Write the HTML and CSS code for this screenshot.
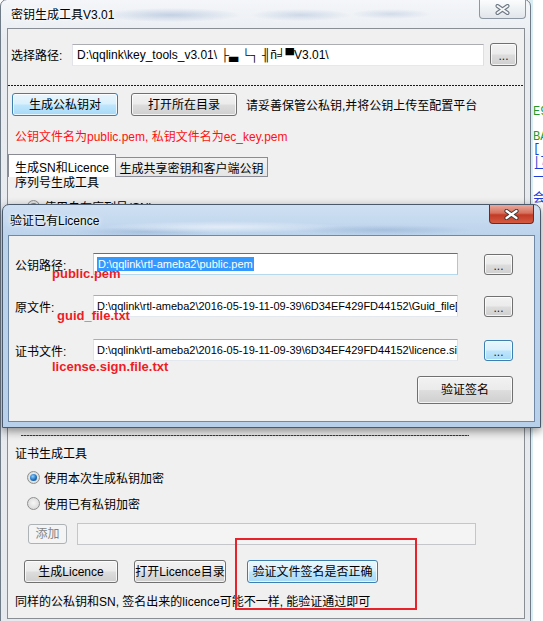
FILE: index.html
```html
<!DOCTYPE html>
<html lang="zh-CN">
<head>
<meta charset="utf-8">
<title>密钥生成工具V3.01</title>
<link rel="stylesheet" href="styles.css">
</head>
<body>
<div class="bgwin">
  <div class="code">
    <div class="ln g t1">E9</div>
    <div class="ln g t2">BA</div>
    <div class="ln b t3">[</div>
    <div class="ln b t4">|7&lt;</div>
    <div class="ln b t5">二</div>
    <div class="ln b t6">会</div>
  </div>
</div>

<div class="win main">
  <div class="titlebar">
    <span class="title">密钥生成工具V3.01</span>
    <div class="cbtn cbtn-gray">
      <svg width="15" height="11" viewBox="0 0 15 11"><path d="M2.5 2 L12.5 9 M12.5 2 L2.5 9" stroke="#6c7783" stroke-width="4" stroke-linecap="round"/><path d="M2.5 2 L12.5 9 M12.5 2 L2.5 9" stroke="#f4f6f8" stroke-width="2" stroke-linecap="round"/></svg>
    </div>
  </div>
  <div class="client main-client">
    <div class="row path-row">
      <span class="lbl lbl-path">选择路径:</span>
      <div class="tb tb-path">D:\qqlink\key_tools_v3.01\ ├▃ └┐ ╢ñ╛▀V3.01\</div>
      <button class="btn dots-btn main-dots">...</button>
    </div>
    <div class="dash"></div>
    <div class="row key-row">
      <button class="btn blue w106">生成公私钥对</button>
      <button class="btn w106 gap13">打开所在目录</button>
      <span class="note">请妥善保管公私钥,并将公钥上传至配置平台</span>
    </div>
    <div class="red-note">公钥文件名为public.pem, 私钥文件名为ec_key.pem</div>
    <div class="tabs">
      <div class="tab tab-sel">生成SN和Licence</div>
      <div class="tab tab-off">生成共享密钥和客户端公钥</div>
    </div>
    <div class="group-title gt1">序列号生成工具</div>
    <div class="radio-row rr0"><span class="radio on"></span><span>使用自有序列号(SN)</span></div>

    <div class="dotline"></div>
    <div class="group-title gt2">证书生成工具</div>
    <div class="radio-row rr1"><span class="radio on"></span><span>使用本次生成私钥加密</span></div>
    <div class="radio-row rr2"><span class="radio"></span><span>使用已有私钥加密</span></div>
    <div class="row add-row">
      <button class="btn dis add-btn">添加</button>
      <div class="tb tb-dis"></div>
    </div>
    <div class="row act-row">
      <button class="btn b1">生成Licence</button>
      <button class="btn b2">打开Licence目录</button>
      <button class="btn blue b3">验证文件签名是否正确</button>
    </div>
    <div class="bottom-note">同样的公私钥和SN, 签名出来的licence可能不一样, 能验证通过即可</div>
  </div>
</div>

<div class="win dlg">
  <div class="titlebar dlg-tb">
    <span class="title dlg-title">验证已有Licence</span>
    <div class="cbtn cbtn-red">
      <svg width="15" height="11" viewBox="0 0 15 11"><path d="M2.5 2 L12.5 9 M12.5 2 L2.5 9" stroke="#3d3d3d" stroke-width="4.2" stroke-linecap="round"/><path d="M2.5 2 L12.5 9 M12.5 2 L2.5 9" stroke="#ffffff" stroke-width="2.2" stroke-linecap="round"/></svg>
    </div>
  </div>
  <div class="client dlg-client">
    <div class="row drow dr1">
      <span class="dlbl">公钥路径:</span>
      <div class="tb dtb focus"><span class="sel">D:\qqlink\rtl-ameba2\public.pem</span></div>
      <button class="btn dots-btn ddots">...</button>
    </div>
    <div class="row drow dr2">
      <span class="dlbl">原文件:</span>
      <div class="tb dtb">D:\qqlink\rtl-ameba2\2016-05-19-11-09-39\6D34EF429FD44152\Guid_file[</div>
      <button class="btn dots-btn ddots">...</button>
    </div>
    <div class="row drow dr3">
      <span class="dlbl">证书文件:</span>
      <div class="tb dtb">D:\qqlink\rtl-ameba2\2016-05-19-11-09-39\6D34EF429FD44152\licence.si</div>
      <button class="btn blue dots-btn ddots">...</button>
    </div>
    <button class="btn verify">验证签名</button>
  </div>
</div>

<div class="annot a1">public.pem</div>
<div class="annot a2">guid_file.txt</div>
<div class="annot a3">license.sign.file.txt</div>
<div class="redbox"></div>
</body>
</html>
```

FILE: styles.css
```css
* { box-sizing: border-box; }
html, body { margin: 0; padding: 0; }
body {
  width: 543px;
  height: 621px;
  overflow: hidden;
  position: relative;
  background: #ffffff;
  font-family: "Liberation Sans", "Noto Sans CJK SC", sans-serif;
  font-size: 12px;
  color: #000;
}

/* background editor window on the right */
.bgwin {
  position: absolute;
  left: 529px;
  top: 0;
  width: 14px;
  height: 621px;
  overflow: hidden;
  background: #ffffff;
  border-left: 4px solid #d9eef4;
}
.code { font-family: "Liberation Mono", "Noto Sans CJK SC", monospace; font-size: 12px; line-height: 12px; }
.ln { white-space: nowrap; }
.g { color: #1f9a2a; }
.b { color: #1d3fd8; }
.t1 { margin-top: 106px; }
.t2 { margin-top: 13px; }
.t3 { margin-top: 0; }
.t4 { margin-top: 1px; }
.t5 { margin-top: 0; }
.t6 { margin-top: 13px; }

/* windows */
.win {
  position: absolute;
  border: 1px solid #707b88;
  border-radius: 7px 7px 0 0;
  display: flex;
  flex-direction: column;
}
.main {
  left: 0;
  top: -1px;
  width: 531px;
  height: 640px;
  padding: 0 5px 0 6px;
  background:
    radial-gradient(ellipse 70px 7px at 170px 15px, rgba(140,168,205,.45), transparent),
    radial-gradient(ellipse 50px 6px at 300px 15px, rgba(140,168,205,.35), transparent),
    radial-gradient(ellipse 40px 5px at 390px 14px, rgba(140,168,205,.30), transparent),
    linear-gradient(#f4f6f9, #e8ecf1 40px, #e6e9ee);
}
.titlebar {
  height: 28px;
  display: flex;
  align-items: flex-start;
  flex: none;
}
.title {
  line-height: 30px;
  padding-left: 4px;
  text-shadow: 0 0 6px #fff, 0 0 3px #fff;
}
.cbtn {
  margin-left: auto;
  width: 47px;
  height: 19px;
  border-radius: 0 0 4px 4px;
  display: flex;
  align-items: center;
  justify-content: center;
}
.cbtn-gray {
  margin-right: -1px;
  border: 1px solid #8d97a3;
  border-top: none;
  background: linear-gradient(#fbfcfd, #eef1f4 50%, #e2e6eb);
}
.client {
  border: 1px solid #898e95;
  background: #f0f0f0;
  position: relative;
}
.main-client { height: 591px; }

.row { display: flex; align-items: center; }
.lbl-path { width: 61px; white-space: nowrap; }
.path-row { margin: 14px 0 0 3px; height: 23px; }

.tb {
  height: 22px;
  background: #fff;
  border: 1px solid;
  border-color: #abadb3 #dbdfe6 #e3e9ef #e2e3ea;
  white-space: nowrap;
  overflow: hidden;
  line-height: 20px;
}
.tb-path { width: 412px; padding-left: 4px; font-family: "Liberation Sans", "DejaVu Sans", sans-serif; }

.btn {
  font-family: inherit;
  font-size: 12px;
  color: #000;
  padding: 0;
  border: 1px solid #707070;
  border-radius: 3px;
  background: linear-gradient(#f2f2f2 0%, #ebebeb 48%, #dddddd 52%, #cfcfcf 100%);
  box-shadow: inset 0 0 0 1px rgba(255,255,255,.75);
  line-height: 1;
  white-space: nowrap;
}
.btn.blue {
  border-color: #3c7fb1;
  background: linear-gradient(#eaf6fd 0%, #d9f0fc 48%, #bee6fd 52%, #a7d9f5 100%);
}
.btn.dis {
  border-color: #adb2b5;
  background: #f4f4f4;
  color: #838383;
  box-shadow: none;
}
.dots-btn { font-size: 12px; padding-top: 3px; color: #1a1a1a; }
.main-dots { width: 27px; height: 23px; margin-left: 6px; }

.dash {
  margin-top: 19px;
  height: 1px;
  background: repeating-linear-gradient(90deg, #1a1a1a 0 2px, transparent 2px 3px);
}
.key-row { margin: 7px 0 0 4px; height: 23px; }
.w106 { width: 106px; height: 23px; }
.gap13 { margin-left: 13px; }
.note { margin-left: 9px; white-space: nowrap; }

.red-note { margin-top: 13px; line-height: 16px; padding-left: 7px; color: #ff1010; }

.tabs { margin-top: 9px; display: flex; align-items: flex-end; height: 23px; }
.tab { display: flex; align-items: center; justify-content: center; white-space: nowrap; border: 1px solid #898c95; }
.tab-sel { width: 108px; height: 23px; background: #fff; border-bottom: none; }
.tab-off { width: 152px; height: 20px; border-left: none; background: linear-gradient(#f2f2f2, #e4e4e4); }

.group-title { padding-left: 7px; line-height: 14px; }
.gt1 { margin-top: -1px; }
.radio-row { display: flex; align-items: center; height: 16px; padding-left: 19px; gap: 4px; }
.rr0 { margin-top: 8px; }
.radio {
  position: relative;
  width: 13px;
  height: 13px;
  border-radius: 50%;
  border: 1px solid #8e8f8f;
  background: radial-gradient(circle at 50% 45%, #f6f6f6, #dcdcdc 70%, #c8c8c8);
  flex: none;
}
.radio.on::after {
  content: "";
  position: absolute;
  left: 2px;
  top: 2px;
  width: 7px;
  height: 7px;
  border-radius: 50%;
  background: radial-gradient(circle at 40% 35%, #8fd0ff, #1c6fc0 55%, #0c3f7a);
}

.dotline {
  margin: 221px 0 0 13px;
  width: 448px;
  height: 1px;
  background: repeating-linear-gradient(90deg, #3a3a3a 0 2px, #d9883a 2px 3px);
}
.gt2 { margin-top: 11px; }
.rr1 { margin-top: 8px; }
.rr2 { margin-top: 10px; }
.add-row { margin-top: 12px; height: 22px; }
.add-btn { margin-left: 20px; width: 39px; height: 20px; }
.tb-dis { width: 399px; margin-left: 10px; background: #f4f4f4; border-color: #c4c6ca; }

.act-row { margin-top: 15px; height: 23px; }
.b1 { margin-left: 16px; width: 94px; height: 23px; }
.b2 { margin-left: 16px; width: 92px; height: 23px; }
.b3 { margin-left: 21px; width: 131px; height: 23px; }
.bottom-note { margin-top: 11px; padding-left: 7px; line-height: 16px; white-space: nowrap; }

/* dialog */
.dlg {
  left: 2px;
  top: 204px;
  width: 539px;
  height: 224px;
  padding: 0 5px 5px 5px;
  border-color: #4a5a6c;
  background:
    radial-gradient(ellipse 120px 6px at 220px 22px, rgba(255,255,255,.55), transparent),
    radial-gradient(ellipse 90px 5px at 380px 25px, rgba(120,150,190,.35), transparent),
    radial-gradient(ellipse 70px 5px at 140px 27px, rgba(120,150,190,.30), transparent),
    linear-gradient(#cfe0f2, #bcd3ec 30px, #b8d0ea);
  box-shadow: 0 3px 10px rgba(0,0,0,.45);
}
.dlg-tb { height: 30px; }
.dlg-title { line-height: 32px; padding-left: 2px; }
.cbtn-red {
  margin-right: 1px;
  width: 45px;
  height: 19px;
  border: 1px solid #6b2a22;
  border-top: none;
  background: linear-gradient(#e9a99b 0%, #d6705e 45%, #c23b26 55%, #d45a42 100%);
}
.dlg-client { height: 188px; border-color: #6f88a6; }
.drow { height: 22px; padding-left: 6px; }
.dr1 { margin-top: 17px; }
.dr2 { margin-top: 20px; }
.dr3 { margin-top: 22px; }
.dlbl { width: 78px; white-space: nowrap; }
.dtb { width: 365px; padding-left: 3px; font-size: 11px; }
.dtb.focus { border-color: #3d7bad #a4c9e3 #b7d9ed #b5cfe7; }
.sel { background: #3399ff; color: #fff; padding: 1px 1px; }
.ddots { width: 29px; height: 21px; margin-left: 26px; }
.verify { margin: 15px 0 0 408px; width: 96px; height: 28px; }

/* annotations */
.annot {
  position: absolute;
  color: #ee1c24;
  font-weight: bold;
  font-size: 13px;
  line-height: 16px;
  white-space: nowrap;
}
.a1 { left: 52px; top: 266px; }
.a2 { left: 57px; top: 308px; }
.a3 { left: 52px; top: 359px; }
.redbox {
  position: absolute;
  left: 235px;
  top: 538px;
  width: 182px;
  height: 72px;
  border: 2px solid #e8222a;
}
```
